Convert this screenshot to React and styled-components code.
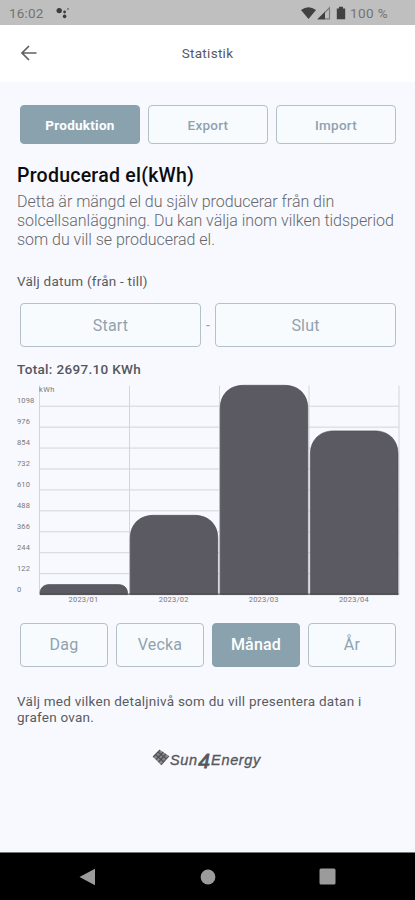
import React from "react";
import styled, { createGlobalStyle } from "styled-components";

const GlobalStyle = createGlobalStyle`
  * { box-sizing: border-box; }
  body { margin: 0; background: #f7f9fe; }
`;

const Screen = styled.div`
  display: flex;
  flex-direction: column;
  width: 415px;
  height: 900px;
  overflow: hidden;
  background: #f7f9fe;
  font-family: Roboto, "Liberation Sans", sans-serif;
`;

const StatusBar = styled.div`
  display: flex;
  align-items: center;
  height: 25px;
  padding: 1px 27px 0 9px;
  background: #bfbfbf;
  color: #737373;
  font-size: 13.5px;
`;

const Clock = styled.span`
  width: 47px;
  letter-spacing: 0.15px;
`;

const StatusIcons = styled.div`
  display: flex;
  align-items: center;
  margin-left: auto;
`;

const Battery = styled.span`
  margin-left: 3px;
  letter-spacing: 0.4px;
`;

const Header = styled.header`
  display: grid;
  grid-template-columns: 60px 1fr 60px;
  align-items: center;
  height: 57px;
  padding-bottom: 1px;
  background: #fff;
`;

const BackButton = styled.button`
  display: flex;
  padding: 0 0 0 20px;
  border: 0;
  background: none;
`;

const Title = styled.h1`
  margin: 0;
  text-align: center;
  font-size: 13.5px;
  font-weight: 400;
  letter-spacing: 0.3px;
  color: #58585c;
`;

const Content = styled.main`
  flex: 1;
  display: flex;
  flex-direction: column;
  padding: 23px 16px 0 17px;
`;

const ButtonRow = styled.div`
  display: flex;
  align-items: center;
  gap: 8px;
  padding: 0 3px;
`;

const Button = styled.button`
  flex: 1 1 0;
  height: ${(p) => (p.$tall ? 44 : 39)}px;
  padding: 0;
  border: 1.5px solid ${(p) => (p.$active ? "#8aa2ae" : "#b4c1c7")};
  border-radius: 4px;
  background: ${(p) => (p.$active ? "#8aa2ae" : "#f8fbfe")};
  color: ${(p) => (p.$active ? "#fff" : "#90a2af")};
  font-family: inherit;
  font-size: ${(p) => (p.$tall ? 16 : 13.5)}px;
  font-weight: ${(p) => (p.$active && !p.$tall ? 700 : p.$active || !p.$tall ? 500 : 400)};
  letter-spacing: ${(p) => (p.$tall ? 0.2 : 0.25)}px;
`;

const DateRow = styled.div`
  display: flex;
  align-items: center;
  margin-top: 14px;
  padding: 0 3px;
`;

const Dash = styled.span`
  width: 14px;
  text-align: center;
  font-size: 14px;
  color: #90a2af;
`;

const Heading = styled.h2`
  margin: 20px 0 0;
  font-size: 19.5px;
  line-height: 24px;
  font-weight: 500;
  letter-spacing: 0.25px;
  color: #0c0c0e;
`;

const Lead = styled.p`
  margin: 4px 0 0;
  font-size: 16px;
  line-height: 19.2px;
  font-weight: 300;
  letter-spacing: -0.03px;
  color: #66676b;
  white-space: nowrap;
`;

const Label = styled.div`
  margin-top: 23.4px;
  font-size: 13.5px;
  line-height: 16px;
  letter-spacing: 0.22px;
  color: #5a5b5f;
`;

const Total = styled.div`
  margin-top: 14px;
  font-size: 13.5px;
  line-height: 16px;
  font-weight: 500;
  letter-spacing: 0.33px;
  color: #55565a;
`;

const ChartSvg = styled.svg`
  display: block;
  margin: 6px 0 0 -17px;
  flex: none;
`;

const AxisText = styled.text`
  font-family: Roboto, sans-serif;
  font-size: 7.5px;
  letter-spacing: ${(p) => p.$spacing || 0}px;
  fill: #77787c;
`;

const PeriodRow = styled(ButtonRow)`
  margin-top: 13.6px;
`;

const Note = styled.p`
  margin: 26px 0 0;
  font-size: 13.5px;
  line-height: 16px;
  letter-spacing: 0.25px;
  color: #5a5b5f;
  white-space: nowrap;
`;

const Logo = styled.div`
  display: flex;
  align-items: center;
  margin: 23px 0 0 135px;
  height: 24px;
  color: #58585c;
`;

const LogoMark = styled.svg`
  margin-top: -4px;
`;

const LogoText = styled.span`
  display: flex;
  align-items: center;
  font-family: "Liberation Sans", Arial, sans-serif;
  font-size: 14.5px;
  font-style: italic;
  letter-spacing: 0.65px;
  -webkit-text-stroke: 0.35px currentColor;
`;

const LogoFour = styled.span`
  font-size: 21px;
  line-height: 20px;
  margin: 2px 0.5px 0 0.5px;
  -webkit-text-stroke-width: 0.8px;
`;

const NavBar = styled.nav`
  display: flex;
  justify-content: space-between;
  align-items: center;
  height: 48px;
  padding: 0 79px;
  border-top: 1px solid #77787a;
  background: #000;
`;

const TICKS = [1098, 976, 854, 732, 610, 488, 366, 244, 122, 0];
const BARS = [
  { label: "2023/01", x: 40, top: 585, r: 9 },
  { label: "2023/02", x: 130.2, top: 515.7, r: 23 },
  { label: "2023/03", x: 220.2, top: 385.7, r: 23 },
  { label: "2023/04", x: 310.4, top: 431.3, r: 23 },
];
const BASE = 595;

function barPath({ x, top, r }) {
  const w = 87.6;
  const c = r * 0.4;
  return `M${x} ${BASE}V${top + r}C${x} ${top + c} ${x + c} ${top} ${x + r} ${top}H${x + w - r}C${x + w - c} ${top} ${x + w} ${top + c} ${x + w} ${top + r}V${BASE}Z`;
}

function Chart() {
  return (
    <ChartSvg width="415" height="226" viewBox="0 383.4 415 226">
      <g stroke="#d3d5da" strokeWidth="1">
        {TICKS.map((t, i) => (
          <line key={t} x1="39.5" x2="399" y1={406.6 + i * 20.93} y2={406.6 + i * 20.93} />
        ))}
        {[39.5, 129.5, 219.5, 309, 399].map((x) => (
          <line key={x} x1={x} x2={x} y1="386" y2={BASE} />
        ))}
      </g>
      {TICKS.map((t, i) => (
        <AxisText key={t} x="17" y={403.7 + i * 20.93} $spacing={0.1}>{t}</AxisText>
      ))}
      <AxisText x="39" y="392.5" $spacing={0.45}>kWh</AxisText>
      {BARS.map((b) => (
        <React.Fragment key={b.label}>
          <path d={barPath(b)} fill="#5b5a62" stroke="#45454b" strokeWidth="0.6" />
          <AxisText x={b.x + 43.5} y="602.5" textAnchor="middle" $spacing={0.22}>{b.label}</AxisText>
        </React.Fragment>
      ))}
      <line x1="40" x2="398.5" y1="594.5" y2="594.5" stroke="#46464b" />
    </ChartSvg>
  );
}

export default function App() {
  return (
    <Screen>
      <GlobalStyle />
      <StatusBar>
        <Clock>16:02</Clock>
        <svg width="14" height="14" viewBox="0 0 14 14" fill="#3c3c3c">
          <circle cx="3.2" cy="4.6" r="2.7" />
          <circle cx="8.6" cy="6" r="1.4" />
          <circle cx="8.6" cy="10.4" r="1.8" />
          <circle cx="12" cy="3" r="0.8" />
        </svg>
        <StatusIcons>
          <svg width="46" height="15" viewBox="0 0 46 15">
            <path d="M0 4Q7.5-1.5 15 4L7.5 13Z" fill="#414141" />
            <path d="M17.5 12.8 28.5 1.8V12.8Z" fill="none" stroke="#7d7d7d" strokeWidth="1.2" />
            <path d="M16.5 13.3 24 5.8V13.3Z" fill="#414141" />
            <path d="M38 .8h4v1.6h2.2v10.9h-8.4V2.4H38Z" fill="#414141" />
          </svg>
          <Battery>100 %</Battery>
        </StatusIcons>
      </StatusBar>
      <Header>
        <BackButton aria-label="Tillbaka">
          <svg width="18" height="16" viewBox="0 0 18 16" fill="none" stroke="#606064" strokeWidth="1.7">
            <path d="M16.5 8H2M9 1 2 8l7 7" />
          </svg>
        </BackButton>
        <Title>Statistik</Title>
      </Header>
      <Content>
        <ButtonRow>
          <Button $active>Produktion</Button>
          <Button>Export</Button>
          <Button>Import</Button>
        </ButtonRow>
        <Heading>Producerad el(kWh)</Heading>
        <Lead>
          Detta är mängd el du själv producerar från din<br />
          solcellsanläggning. Du kan välja inom vilken tidsperiod<br />
          som du vill se producerad el.
        </Lead>
        <Label>Välj datum (från - till)</Label>
        <DateRow>
          <Button $tall>Start</Button>
          <Dash>-</Dash>
          <Button $tall>Slut</Button>
        </DateRow>
        <Total>Total: 2697.10 KWh</Total>
        <Chart />
        <PeriodRow>
          <Button $tall>Dag</Button>
          <Button $tall>Vecka</Button>
          <Button $tall $active>Månad</Button>
          <Button $tall>År</Button>
        </PeriodRow>
        <Note>
          Välj med vilken detaljnivå som du vill presentera datan i<br />
          grafen ovan.
        </Note>
        <Logo>
          <LogoMark width="18" height="18" viewBox="0 0 18 18">
            <path d="M1 8 8 1l9 6-8 9Z" fill="#88888c" />
            <path d="M1 8 8 1M4 10.5 11.3 3M6.5 13 14 5M9 16l8-9M3.5 5.5l8 7M6 3l8.5 7" stroke="#505054" strokeWidth="1.1" fill="none" />
          </LogoMark>
          <LogoText>Sun<LogoFour>4</LogoFour>Energy</LogoText>
        </Logo>
      </Content>
      <NavBar>
        <svg width="17" height="18" viewBox="0 0 17 18"><path d="M.5 9 16 .8V17.2Z" fill="#9b9b9b" /></svg>
        <svg width="16" height="16" viewBox="0 0 16 16"><circle cx="8" cy="8" r="7.4" fill="#9b9b9b" /></svg>
        <svg width="17" height="17" viewBox="0 0 17 17"><rect x=".5" y=".5" width="16" height="16" rx="1.5" fill="#9b9b9b" /></svg>
      </NavBar>
    </Screen>
  );
}
